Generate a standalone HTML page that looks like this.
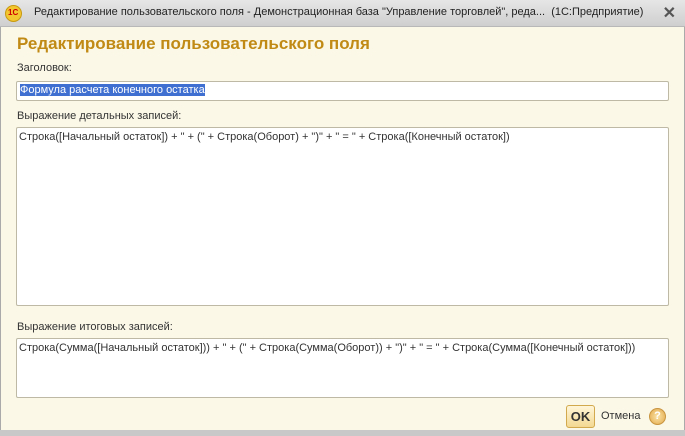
<!DOCTYPE html><html><head><meta charset="utf-8"><style>
body{margin:0;width:685px;height:436px;overflow:hidden;font-family:"Liberation Sans",sans-serif;font-size:11px;color:#333;background:#fbf8e8}
.tb{position:absolute;left:0;top:0;width:685px;height:26px;background:linear-gradient(#e6e6e6,#cfcfcf);border-bottom:1px solid #b8b8b8}
.tb .t{position:absolute;left:34px;top:6px;font-size:11px;color:#222;white-space:nowrap}
.tb .x{position:absolute;right:9px;top:3px;font-size:16px;color:#555;font-weight:bold}
.logo{position:absolute;left:5px;top:5px;width:15px;height:15px;border-radius:50%;background:#f3c630;border:1px solid #c89a10}
.logo:after{content:"1C";position:absolute;left:2px;top:2px;font-size:8px;font-weight:bold;color:#c00}
.win{position:absolute;left:0;top:27px;width:683px;height:403px;border-left:1px solid #aaa;border-right:1px solid #aaa;background:#fbf8e8}
.bot{position:absolute;left:0;top:430px;width:685px;height:6px;background:#c8c8c8}
h1{position:absolute;left:17px;top:34px;margin:0;font-size:17px;color:#c08a14;font-weight:bold}
.l{position:absolute;left:17px}
.box{position:absolute;left:16px;width:651px;background:#fff;border:1px solid #bdb9a5;border-radius:2px}
.box span{position:absolute;left:2px;top:3px;white-space:nowrap}
.sel{background:#3f6fd0;color:#fff}
.ok{position:absolute;left:566px;top:405px;width:27px;height:21px;border:1px solid #d2a94c;border-radius:3px;background:linear-gradient(#fff6d8,#f3d891);font-weight:bold;font-size:13px;text-align:center;line-height:21px;color:#333}
.q{position:absolute;left:649px;top:408px;width:15px;height:15px;border-radius:50%;background:radial-gradient(#fbe3a8,#e2a94a);border:1px solid #c99540;color:#fff;font-size:11px;font-weight:bold;text-align:center;line-height:15px}
</style></head><body>
<div class="tb"><div class="logo"></div><div class="t">Редактирование пользовательского поля - Демонстрационная база "Управление торговлей", реда...&nbsp; (1С:Предприятие)</div><div class="x">✕</div></div>
<div class="win"></div><div class="bot"></div>
<h1>Редактирование пользовательского поля</h1>
<div class="l" style="top:62px">Заголовок:</div>
<div class="box" style="top:81px;height:18px"><span class="sel" style="top:2px;left:3px">Формула расчета конечного остатка</span></div>
<div class="l" style="top:110px">Выражение детальных записей:</div>
<div class="box" style="top:127px;height:177px"><span>Строка([Начальный остаток]) + " + (" + Строка(Оборот) + ")" + " = " + Строка([Конечный остаток])</span></div>
<div class="l" style="top:321px">Выражение итоговых записей:</div>
<div class="box" style="top:338px;height:58px"><span>Строка(Сумма([Начальный остаток])) + " + (" + Строка(Сумма(Оборот)) + ")" + " = " + Строка(Сумма([Конечный остаток]))</span></div>
<div class="ok">OK</div>
<div style="position:absolute;left:601px;top:410px">Отмена</div>
<div class="q">?</div>
</body></html>
